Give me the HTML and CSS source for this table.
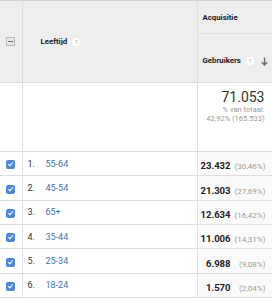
FILE: index.html
```html
<!DOCTYPE html>
<html lang="nl">
<head>
<meta charset="utf-8">
<title>Leeftijd – Gebruikers</title>
<link rel="stylesheet" href="styles.css">
</head>
<body>
<table class="report">
  <colgroup>
    <col class="c-chk">
    <col class="c-dim">
    <col class="c-met">
  </colgroup>
  <thead>
    <tr class="h1">
      <th class="chk" rowspan="2"><span class="box box-minus"></span></th>
      <th class="dim" rowspan="2"><span class="hlabel">Leeftijd</span><span class="help">?</span></th>
      <th class="grp">Acquisitie</th>
    </tr>
    <tr class="h2">
      <th class="met"><span class="hlabel">Gebruikers</span><span class="help">?</span><svg class="sort" width="7" height="9" viewBox="0 0 7 9"><path d="M3.5 0.5V8M0.8 5.3L3.5 8L6.2 5.3" fill="none" stroke="#666" stroke-width="1.3"/></svg></th>
    </tr>
  </thead>
  <tbody>
    <tr class="total">
      <td class="chk"></td>
      <td class="dim"></td>
      <td class="met">
        <div class="tot-val">71.053</div>
        <div class="tot-sub">% van totaal:</div>
        <div class="tot-sub">42,92% (165.533)</div>
      </td>
    </tr>
    <tr class="row">
      <td class="chk"><span class="box box-on"></span></td>
      <td class="dim"><span class="idx">1.</span><a class="val">55-64</a></td>
      <td class="met"><span class="num">23.432</span><span class="pct">(30,46%)</span></td>
    </tr>
    <tr class="row">
      <td class="chk"><span class="box box-on"></span></td>
      <td class="dim"><span class="idx">2.</span><a class="val">45-54</a></td>
      <td class="met"><span class="num">21.303</span><span class="pct">(27,69%)</span></td>
    </tr>
    <tr class="row">
      <td class="chk"><span class="box box-on"></span></td>
      <td class="dim"><span class="idx">3.</span><a class="val">65+</a></td>
      <td class="met"><span class="num">12.634</span><span class="pct">(16,42%)</span></td>
    </tr>
    <tr class="row">
      <td class="chk"><span class="box box-on"></span></td>
      <td class="dim"><span class="idx">4.</span><a class="val">35-44</a></td>
      <td class="met"><span class="num">11.006</span><span class="pct">(14,31%)</span></td>
    </tr>
    <tr class="row">
      <td class="chk"><span class="box box-on"></span></td>
      <td class="dim"><span class="idx">5.</span><a class="val">25-34</a></td>
      <td class="met"><span class="num">6.988</span><span class="pct">(9,08%)</span></td>
    </tr>
    <tr class="row">
      <td class="chk"><span class="box box-on"></span></td>
      <td class="dim"><span class="idx">6.</span><a class="val">18-24</a></td>
      <td class="met"><span class="num">1.570</span><span class="pct">(2,04%)</span></td>
    </tr>
  </tbody>
</table>
</body>
</html>
```

FILE: styles.css
```css
html, body {
  margin: 0;
  padding: 0;
  background: #ffffff;
}

body {
  font-family: Roboto, "Liberation Sans", Arial, sans-serif;
  color: #222222;
  width: 272px;
  height: 300px;
  overflow: hidden;
}

.report {
  border-collapse: collapse;
  table-layout: fixed;
  width: 272px;
}

.c-chk { width: 22px; }
.c-dim { width: 175px; }
.c-met { width: 75px; }

.report th,
.report td {
  border: 1px solid #dedede;
  padding: 0;
}

.report thead tr.h1 th {
  border-top: 1px solid #cfcfcf;
}

.report th {
  background: #eeeeee;
  font-weight: 700;
  font-size: 7.8px;
  text-align: left;
  color: #1a1a1a;
}

.report th.chk,
.report td.chk {
  border-left: 0;
  text-align: center;
  vertical-align: middle;
}

.report th.dim {
  vertical-align: middle;
  padding-left: 18px;
}

.h1 th.grp {
  height: 32px;
  padding-left: 5px;
  vertical-align: middle;
}

.h2 th.met {
  height: 42px;
  padding-left: 5px;
  padding-top: 6px;
  vertical-align: middle;
  white-space: nowrap;
}

.hlabel {
  vertical-align: middle;
}

.help {
  display: inline-block;
  vertical-align: middle;
  width: 8px;
  height: 8px;
  line-height: 8px;
  border-radius: 50%;
  background: #ffffff;
  color: #a8a8a8;
  font-size: 6px;
  font-weight: 400;
  text-align: center;
  margin-left: 5px;
}

.sort {
  display: inline-block;
  vertical-align: middle;
  margin-left: 7px;
}

.box {
  display: inline-block;
  width: 9px;
  height: 9px;
  box-sizing: border-box;
  vertical-align: middle;
  position: relative;
}

.box-minus {
  border: 1px solid #b9b9b9;
  background: #e6e6e6;
}

.box-minus::after {
  content: "";
  position: absolute;
  left: 1px;
  right: 1px;
  top: 3px;
  height: 1px;
  background: #777777;
}

.box-on {
  border-radius: 2px;
  background: #4a86e8;
}

.box-on::after {
  content: "";
  position: absolute;
  left: 3px;
  top: 1px;
  width: 2px;
  height: 4px;
  border-right: 1px solid #ffffff;
  border-bottom: 1px solid #ffffff;
  transform: rotate(40deg);
}

.report td.met {
  text-align: right;
  border-right: 1px solid #dedede;
}

tr.total td {
  height: 62px;
  vertical-align: top;
}

tr.total td.met {
  padding: 6px 7px 0 0;
}

.tot-val {
  font-size: 14px;
  line-height: 16px;
  color: #333333;
}

.tot-sub {
  font-size: 7.5px;
  line-height: 9px;
  color: #999999;
}

tr.row td {
  height: 23.35px;
  vertical-align: middle;
}

tr.row td.met {
  background: #fafafa;
  padding-right: 6px;
  white-space: nowrap;
}

.report td.dim {
  padding-left: 5px;
  font-size: 9px;
  white-space: nowrap;
}

.idx {
  display: inline-block;
  width: 18px;
  color: #333333;
}

.val {
  color: #3b72c2;
  text-decoration: none;
}

.num {
  font-size: 9.5px;
  font-weight: 700;
  color: #222222;
}

.pct {
  display: inline-block;
  min-width: 31px;
  margin-left: 4px;
  text-align: right;
  font-size: 8px;
  color: #9a9a9a;
}
```
